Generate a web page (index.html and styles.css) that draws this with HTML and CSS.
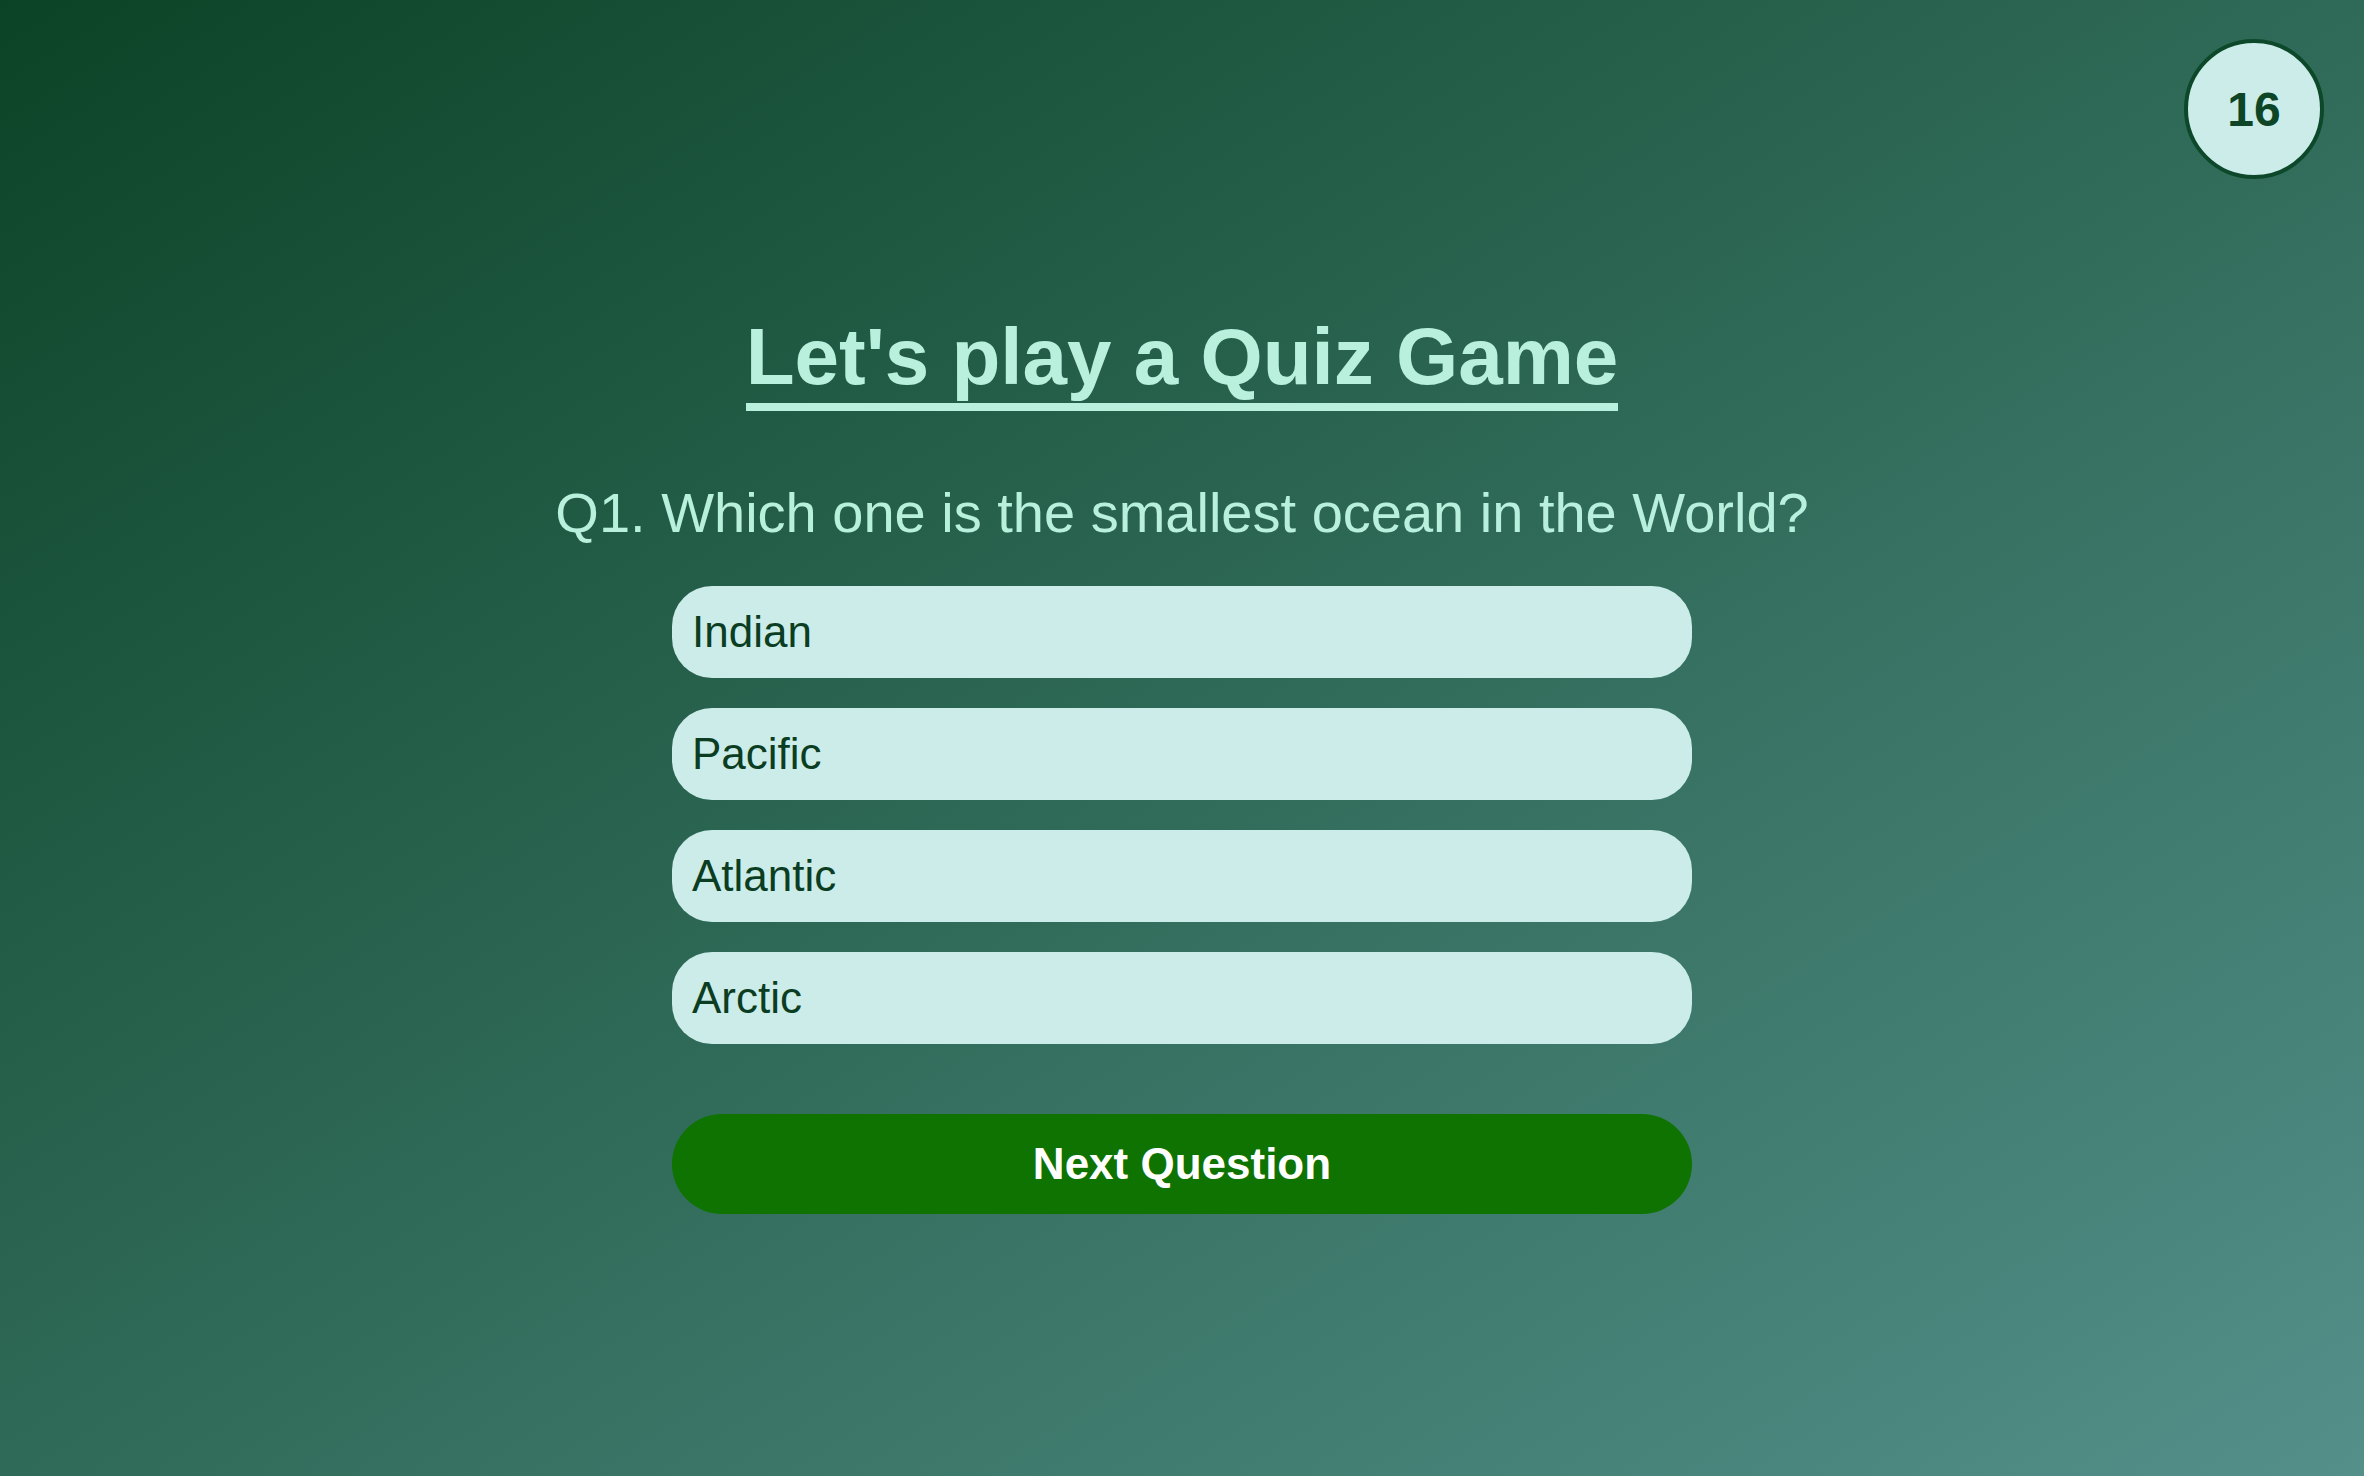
FILE: index.html
```html
<!DOCTYPE html>
<html lang="en">
<head>
<meta charset="utf-8">
<title>Quiz Game</title>
<link rel="stylesheet" href="styles.css">
</head>
<body>
<div class="timer">16</div>
<main class="quiz">
  <h1 class="title">Let's play a Quiz Game</h1>
  <p class="question">Q1. Which one is the smallest ocean in the World?</p>
  <ul class="options">
    <li class="option">Indian</li>
    <li class="option">Pacific</li>
    <li class="option">Atlantic</li>
    <li class="option">Arctic</li>
  </ul>
  <button class="next">Next Question</button>
</main>
</body>
</html>
```
FILE: styles.css
```css
html, body {
  margin: 0;
  padding: 0;
}
body {
  min-height: 100vh;
  font-family: "Liberation Sans", Arial, sans-serif;
  background: linear-gradient(to bottom right, #0b4326, #2f6a58 50%, #548f8a);
  position: relative;
  overflow: hidden;
}
.timer {
  position: absolute;
  top: 39px;
  right: 40px;
  width: 140px;
  height: 140px;
  box-sizing: border-box;
  border: 4px solid #0c4829;
  border-radius: 50%;
  background: #cbece8;
  color: #0d4526;
  font-weight: bold;
  font-size: 48px;
  display: flex;
  align-items: center;
  justify-content: center;
}
.quiz {
  width: 1020px;
  margin: 0 auto;
  padding-top: 311px;
  display: flex;
  flex-direction: column;
  align-items: center;
}
.title {
  display: inline-block;
  margin: 0;
  font-size: 80px;
  line-height: 92px;
  font-weight: bold;
  color: #b9f0dd;
  border-bottom: 8px solid #b9f0dd;
  white-space: nowrap;
}
.question {
  margin: 70px 0 0;
  font-size: 56px;
  line-height: 64px;
  color: #b9f0dd;
  white-space: nowrap;
}
.options {
  list-style: none;
  margin: 41px 0 0;
  padding: 0;
  width: 100%;
  display: flex;
  flex-direction: column;
  gap: 30px;
}
.option {
  height: 92px;
  box-sizing: border-box;
  padding: 0 20px;
  display: flex;
  align-items: center;
  background: #cbece9;
  border-radius: 40px;
  font-size: 44px;
  color: #0b3d22;
}
.next {
  margin-top: 70px;
  width: 100%;
  height: 100px;
  border: none;
  border-radius: 50px;
  background: #0e7300;
  color: #ffffff;
  font-family: "Liberation Sans", Arial, sans-serif;
  font-size: 44px;
  font-weight: bold;
  cursor: pointer;
}
```
